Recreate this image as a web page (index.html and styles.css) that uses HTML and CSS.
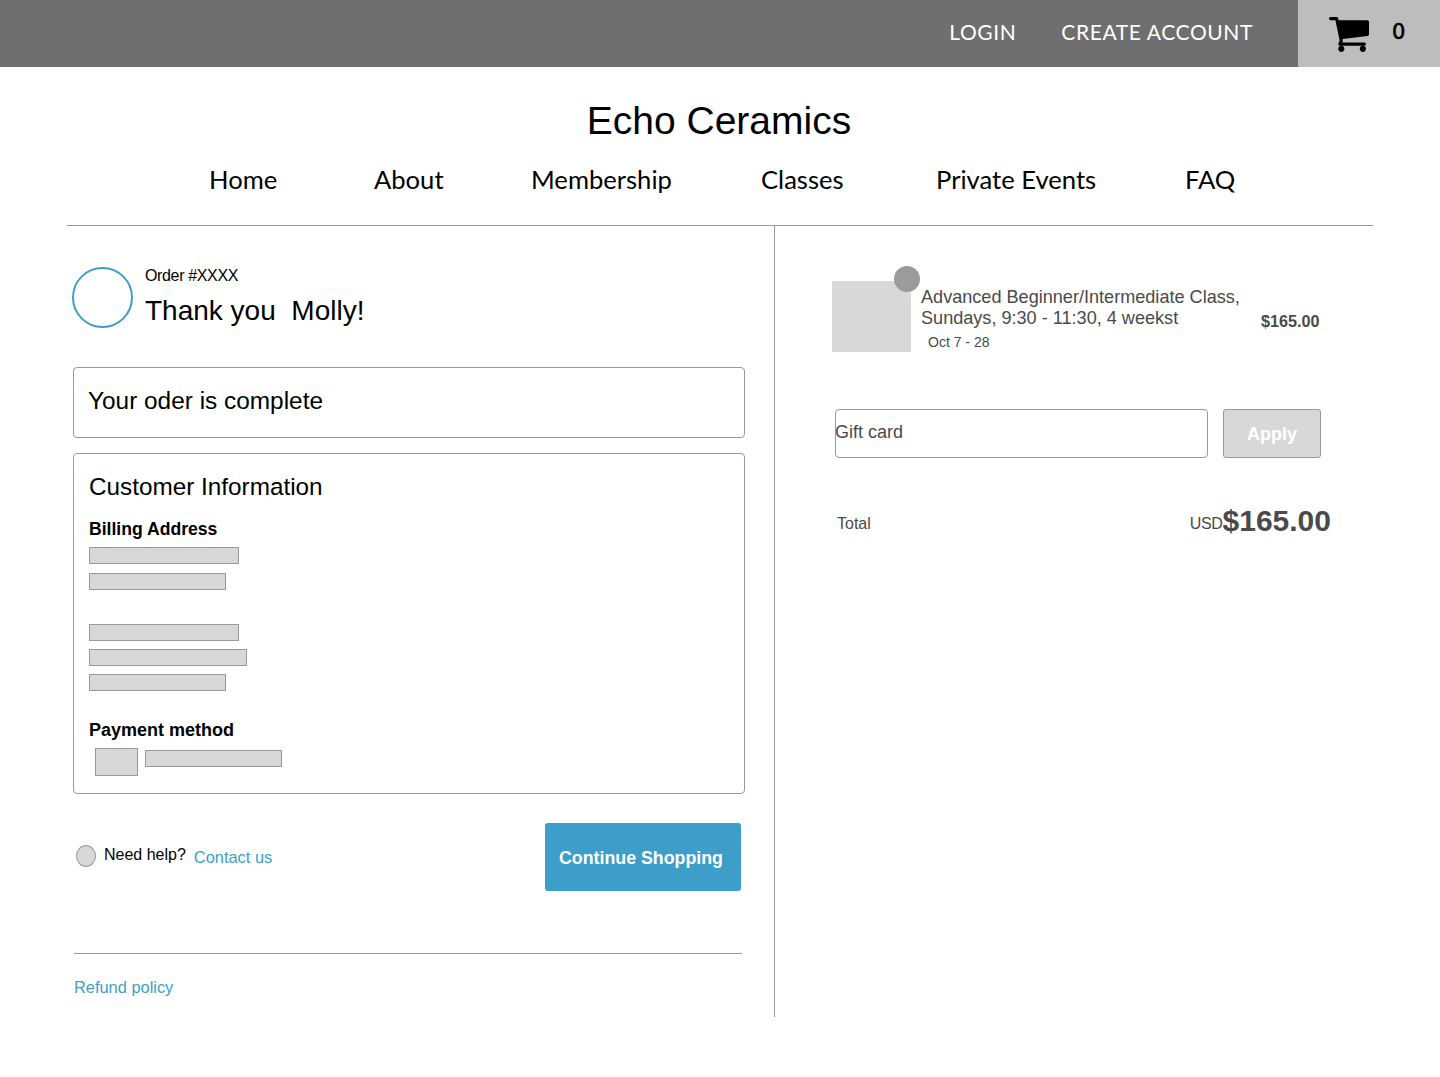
FILE: index.html
```html
<!doctype html>
<html>
 <head>
  <title>Echo Ceramics</title>
  <meta name="viewport" content="width=device-width, initial-scale=1">
  <link rel="stylesheet" href="styles.css">
 </head>
 <body>
  <header class="topbar">
   <a class="top-link login" href="#">LOGIN</a>
   <a class="top-link" href="#">CREATE ACCOUNT</a>
   <div class="cart">
    <svg class="cart-icon" viewBox="0 128 1664 1408" preserveAspectRatio="none">
     <path d="M640 1408q0 52-38 90t-90 38-90-38-38-90 38-90 90-38 90 38 38 90zm896 0q0 52-38 90t-90 38-90-38-38-90 38-90 90-38 90 38 38 90zm128-1088v512q0 24-16.5 42.5t-40.5 21.5l-1044 122q13 60 13 70 0 16-24 64h920q26 0 45 19t19 45-19 45-45 19h-1024q-26 0-45-19t-19-45q0-11 8-31.5t16-36 21.5-40 15.5-29.5l-177-823h-204q-26 0-45-19t-19-45 19-45 45-19h256q16 0 28.5 6.5t19.5 15.5 13 24.5 8 26 5.5 29.5 4.5 26h1201q26 0 45 19t19 45z"/>
    </svg>
    <span class="cart-count">0</span>
   </div>
  </header>
  <h1 class="brand">Echo Ceramics</h1>
  <nav class="mainnav">
   <a href="#">Home</a>
   <a href="#">About</a>
   <a href="#">Membership</a>
   <a href="#">Classes</a>
   <a href="#">Private Events</a>
   <a href="#">FAQ</a>
  </nav>
  <main class="columns">
   <section class="left">
    <div class="thanks">
     <div class="ring"></div>
     <div>
      <div class="order-no">Order #XXXX</div>
      <div class="thank-you">Thank you&nbsp; Molly!</div>
     </div>
    </div>
    <div class="box complete">Your oder is complete</div>
    <div class="box info">
     <h2>Customer Information</h2>
     <h3 class="billing">Billing Address</h3>
     <div class="bar w150"></div>
     <div class="bar w137 gap-9"></div>
     <div class="bar w150 gap-34"></div>
     <div class="bar w158 gap-8"></div>
     <div class="bar w137 gap-8"></div>
     <h3 class="payment">Payment method</h3>
     <div class="pay-row">
      <div class="card-thumb"></div>
      <div class="bar w137"></div>
     </div>
    </div>
    <div class="help-row">
     <div class="help-dot"></div>
     <span class="need-help">Need help?</span>
     <a class="link contact" href="#">Contact us</a>
     <button class="continue">Continue Shopping</button>
    </div>
    <hr class="rule">
    <a class="link refund" href="#">Refund policy</a>
   </section>
   <section class="right">
    <div class="item">
     <div class="thumb"><span class="qty"></span></div>
     <div class="item-text">
      <div class="item-name">Advanced Beginner/Intermediate Class, Sundays, 9:30 - 11:30, 4 weekst</div>
      <div class="item-date">Oct 7 - 28</div>
     </div>
     <div class="item-price">$165.00</div>
    </div>
    <div class="gift">
     <input class="gift-input" placeholder="Gift card">
     <button class="apply">Apply</button>
    </div>
    <div class="total">
     <span class="total-label">Total</span>
     <span class="total-amount"><small>USD</small>$165.00</span>
    </div>
   </section>
  </main>
 </body>
</html>
```

FILE: styles.css
```css
* {
 box-sizing: border-box;
}
body {
 margin: 0;
 height: 1077px;
 overflow: hidden;
 background: #fff;
 color: #000;
 font-family: "Liberation Sans", Arial, sans-serif;
}
a {
 color: inherit;
 text-decoration: none;
}
.topbar {
 display: flex;
 align-items: center;
 justify-content: flex-end;
 height: 67px;
 background: #6f6f6f;
}
.top-link {
 margin: -4px 45px 0 0;
 color: #fff;
 font-family: Lato, sans-serif;
 font-size: 21px;
 letter-spacing: 0.6px;
}
.cart {
 display: flex;
 align-items: center;
 width: 142px;
 height: 67px;
 padding-left: 31px;
 background: #bdbdbd;
}
.cart-icon {
 width: 40px;
 height: 35px;
 margin-top: 2px;
}
.cart-count {
 margin: -3px 0 0 23px;
 font-family: "DejaVu Sans", sans-serif;
 font-size: 21px;
 -webkit-text-stroke: 0.6px #000;
}
.brand {
 margin: 31px 0 0;
 padding-right: 2px;
 text-align: center;
 font-size: 39px;
 font-weight: normal;
 line-height: 46px;
}
.mainnav {
 display: flex;
 height: 81px;
 padding: 0 0 11px 209px;
 align-items: center;
 font-family: Lato, sans-serif;
 font-size: 25.6px;
}
.mainnav a:nth-child(1) { width: 165px; }
.mainnav a:nth-child(2) { width: 157px; }
.mainnav a:nth-child(3) { width: 230px; }
.mainnav a:nth-child(4) { width: 175px; }
.mainnav a:nth-child(5) { width: 249px; }
.columns {
 display: flex;
 height: 792px;
 margin: 0 67px;
 border-top: 1px solid #999;
}
.left {
 width: 708px;
 padding: 41px 29px 0 5px;
 border-right: 1px solid #999;
}
.thanks {
 display: flex;
 gap: 12px;
}
.ring {
 width: 61px;
 height: 61px;
 border: 2px solid #3d9fc9;
 border-radius: 50%;
}
.order-no {
 font-size: 16px;
 letter-spacing: -0.35px;
 line-height: 18px;
}
.thank-you {
 margin-top: 9px;
 font-size: 28px;
 line-height: 34px;
}
.box {
 margin-left: 1px;
 border: 1px solid #999;
 border-radius: 4px;
}
.complete {
 height: 71px;
 margin-top: 39px;
 padding: 0 14px;
 font-size: 24.4px;
 line-height: 66px;
}
.info {
 height: 341px;
 margin-top: 15px;
 padding: 18px 15px 0;
}
.info h2 {
 margin: 0;
 font-size: 24.3px;
 font-weight: normal;
 line-height: 30px;
}
.info h3 {
 margin: 0;
 font-size: 18px;
 line-height: 21px;
}
.info .billing {
 margin: 17px 0 7px;
 font-size: 17.6px;
}
.info .payment {
 margin: 29px 0 7px;
}
.bar {
 height: 17px;
 background: #d8d8d8;
 border: 1px solid #999;
}
.w137 { width: 137px; }
.w150 { width: 150px; }
.w158 { width: 158px; }
.gap-8 { margin-top: 8px; }
.gap-9 { margin-top: 9px; }
.gap-34 { margin-top: 34px; }
.pay-row {
 display: flex;
 gap: 7px;
 padding-left: 6px;
}
.card-thumb {
 width: 43px;
 height: 28px;
 background: #d8d8d8;
 border: 1px solid #999;
}
.pay-row .bar {
 margin-top: 2px;
}
.help-row {
 display: flex;
 align-items: center;
 height: 68px;
 margin: 29px 4px 0 4px;
}
.help-dot {
 width: 20px;
 height: 22px;
 margin-top: -3px;
 background: #d8d8d8;
 border: 1px solid #999;
 border-radius: 50%;
}
.need-help {
 margin: -5px 0 0 8px;
 font-size: 16px;
}
.link {
 color: #3d9fc9;
 font-size: 16.4px;
}
.contact {
 flex: 1;
 margin: 1px 0 0 8px;
}
.continue {
 width: 196px;
 height: 68px;
 padding: 2px 4px 0 0;
 border: none;
 border-radius: 3px;
 background: #3d9fc9;
 color: #fff;
 font: bold 17.8px "Liberation Sans", Arial, sans-serif;
}
.rule {
 height: 1px;
 margin: 62px 3px 0 2px;
 border: none;
 background: #999;
}
.refund {
 display: block;
 margin: 24px 0 0 2px;
 line-height: 19px;
}
.right {
 flex: 1;
 padding: 55px 0 0 57px;
 color: #4a4a4a;
}
.item {
 display: flex;
 height: 71px;
}
.thumb {
 position: relative;
 width: 79px;
 height: 71px;
 flex: none;
 background: #d8d8d8;
}
.qty {
 position: absolute;
 top: -15px;
 right: -9px;
 width: 26px;
 height: 26px;
 border-radius: 50%;
 background: #9b9b9b;
}
.item-text {
 width: 350px;
 padding: 6px 0 0 10px;
 font-size: 18.1px;
 line-height: 21px;
}
.item-name {
 width: 330px;
}
.item-date {
 margin: 5px 0 0 7px;
 font-size: 14px;
 line-height: 16px;
}
.item-price {
 margin: 31px 0 0 0;
 font-size: 16.2px;
 font-weight: bold;
 line-height: 18px;
}
.gift {
 display: flex;
 gap: 15px;
 margin: 57px 0 0 3px;
}
.gift-input {
 width: 373px;
 height: 49px;
 padding: 0 0 2px;
 text-indent: -1px;
 border: 1px solid #999;
 border-radius: 4px;
 background: #fff;
 font: 18px "Liberation Sans", Arial, sans-serif;
}
.gift-input::placeholder {
 color: #4a4a4a;
 opacity: 1;
}
.apply {
 width: 98px;
 height: 49px;
 padding: 2px 0 0;
 border: 1px solid #999;
 border-radius: 3px;
 background: #d8d8d8;
 color: #fff;
 font: bold 18px "Liberation Sans", Arial, sans-serif;
}
.total {
 display: flex;
 align-items: center;
 justify-content: space-between;
 width: 494px;
 height: 40px;
 margin: 44px 0 0 5px;
}
.total-label {
 font-size: 16px;
 margin-top: 4px;
}
.total-amount {
 margin-top: -2px;
 font-size: 30px;
 font-weight: bold;
}
.total-amount small {
 font-size: 16px;
 font-weight: normal;
 letter-spacing: -0.3px;
 vertical-align: 2px;
}
```
